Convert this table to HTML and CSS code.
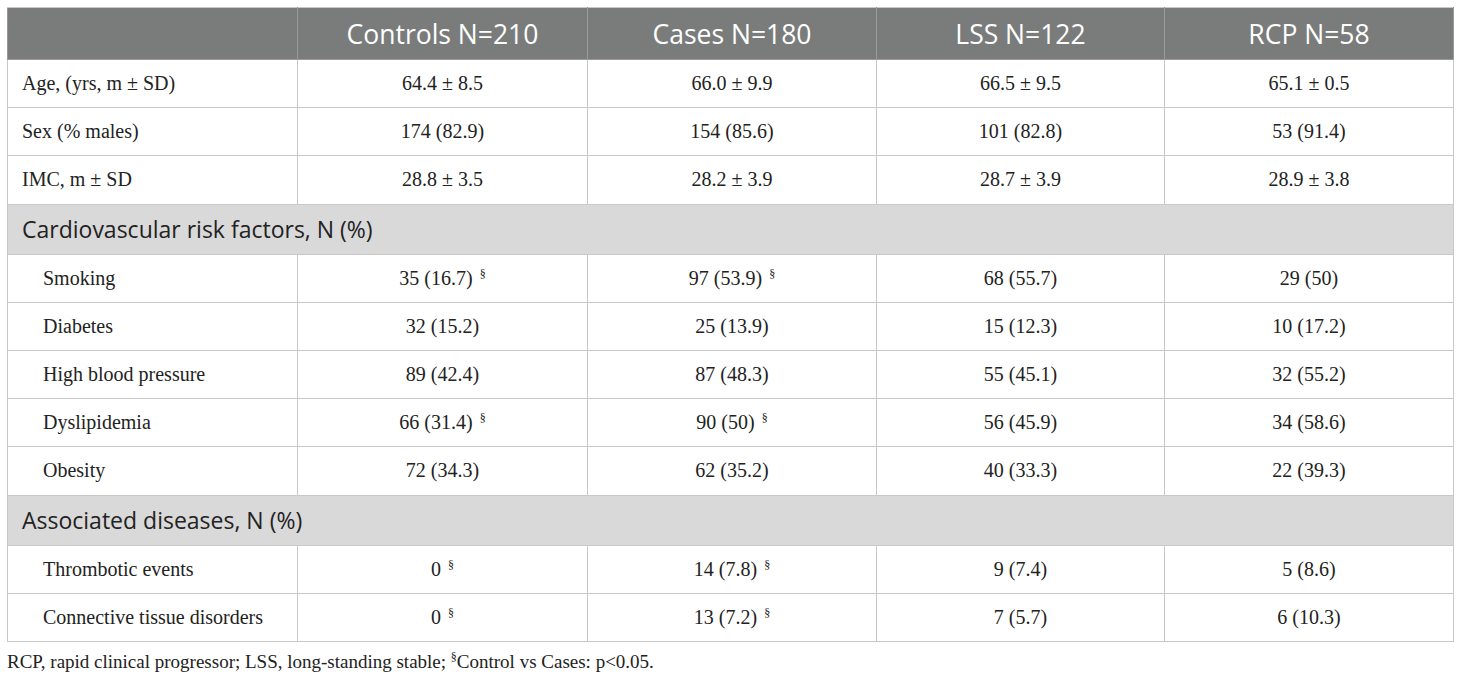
FILE: index.html
```html
<!DOCTYPE html>
<html>
<head>
<meta charset="utf-8">
<link rel="stylesheet" href="styles.css">
</head>
<body>
<div class="wrap">
<table class="data">
  <colgroup>
    <col class="c0"><col class="c1"><col class="c2"><col class="c3"><col class="c4">
  </colgroup>
  <thead>
    <tr class="head">
      <th></th>
      <th>Controls N=210</th>
      <th>Cases N=180</th>
      <th>LSS N=122</th>
      <th>RCP N=58</th>
    </tr>
  </thead>
  <tbody>
    <tr><td class="lab">Age, (yrs, m ± SD)</td><td>64.4 ± 8.5</td><td>66.0 ± 9.9</td><td>66.5 ± 9.5</td><td>65.1 ± 0.5</td></tr>
    <tr><td class="lab">Sex (% males)</td><td>174 (82.9)</td><td>154 (85.6)</td><td>101 (82.8)</td><td>53 (91.4)</td></tr>
    <tr><td class="lab">IMC, m ± SD</td><td>28.8 ± 3.5</td><td>28.2 ± 3.9</td><td>28.7 ± 3.9</td><td>28.9 ± 3.8</td></tr>
    <tr class="sect"><td colspan="5">Cardiovascular risk factors, N (%)</td></tr>
    <tr><td class="lab ind">Smoking</td><td>35 (16.7) <sup>§</sup></td><td>97 (53.9) <sup>§</sup></td><td>68 (55.7)</td><td>29 (50)</td></tr>
    <tr><td class="lab ind">Diabetes</td><td>32 (15.2)</td><td>25 (13.9)</td><td>15 (12.3)</td><td>10 (17.2)</td></tr>
    <tr><td class="lab ind">High blood pressure</td><td>89 (42.4)</td><td>87 (48.3)</td><td>55 (45.1)</td><td>32 (55.2)</td></tr>
    <tr><td class="lab ind">Dyslipidemia</td><td>66 (31.4) <sup>§</sup></td><td>90 (50) <sup>§</sup></td><td>56 (45.9)</td><td>34 (58.6)</td></tr>
    <tr><td class="lab ind">Obesity</td><td>72 (34.3)</td><td>62 (35.2)</td><td>40 (33.3)</td><td>22 (39.3)</td></tr>
    <tr class="sect"><td colspan="5">Associated diseases, N (%)</td></tr>
    <tr><td class="lab ind">Thrombotic events</td><td>0 <sup>§</sup></td><td>14 (7.8) <sup>§</sup></td><td>9 (7.4)</td><td>5 (8.6)</td></tr>
    <tr><td class="lab ind">Connective tissue disorders</td><td>0 <sup>§</sup></td><td>13 (7.2) <sup>§</sup></td><td>7 (5.7)</td><td>6 (10.3)</td></tr>
  </tbody>
</table>
<p class="note">RCP, rapid clinical progressor; LSS, long-standing stable; <sup>§</sup>Control vs Cases: p&lt;0.05.</p>
</div>
</body>
</html>
```

FILE: styles.css
```css
html, body {
  margin: 0;
  padding: 0;
  background: #ffffff;
}
.wrap {
  padding: 7px 7px 0 7px;
}
.data {
  width: 1446px;
  border-collapse: collapse;
  table-layout: fixed;
  font-family: "Liberation Serif", "Times New Roman", serif;
  color: #222222;
}
.c0 { width: 290px; }
.c1 { width: 290px; }
.c2 { width: 289px; }
.c3 { width: 288px; }
.c4 { width: 289px; }
.data th, .data td {
  border: 1px solid #c9c9c9;
  text-align: center;
  padding: 0;
}
.head th {
  background: #7a7c7b;
  color: #ffffff;
  font-family: "Open Sans", "Noto Sans", sans-serif;
  font-weight: 400;
  font-size: 26.5px;
  height: 51px;
  border-color: #9a9a9a;
  border-top-color: #c9c9c9;
}
.data td {
  height: 47.2px;
  font-size: 20px;
}
.data td.lab {
  text-align: left;
  padding-left: 14px;
}
.data td.ind {
  padding-left: 35px;
}
.data .sect td {
  height: 49px;
  background: #d9d9d9;
  text-align: left;
  padding-left: 14px;
  font-family: "Open Sans", "Noto Sans", sans-serif;
  font-size: 23px;
  color: #222222;
}
sup {
  font-size: 12px;
  vertical-align: 7px;
  line-height: 0;
  margin-left: 2px;
}
.note {
  margin: 9px 0 0 0;
  font-family: "Liberation Serif", "Times New Roman", serif;
  font-size: 19px;
  color: #222222;
}
.note sup {
  font-size: 12px;
  vertical-align: 7px;
  margin-left: 0;
}
```
